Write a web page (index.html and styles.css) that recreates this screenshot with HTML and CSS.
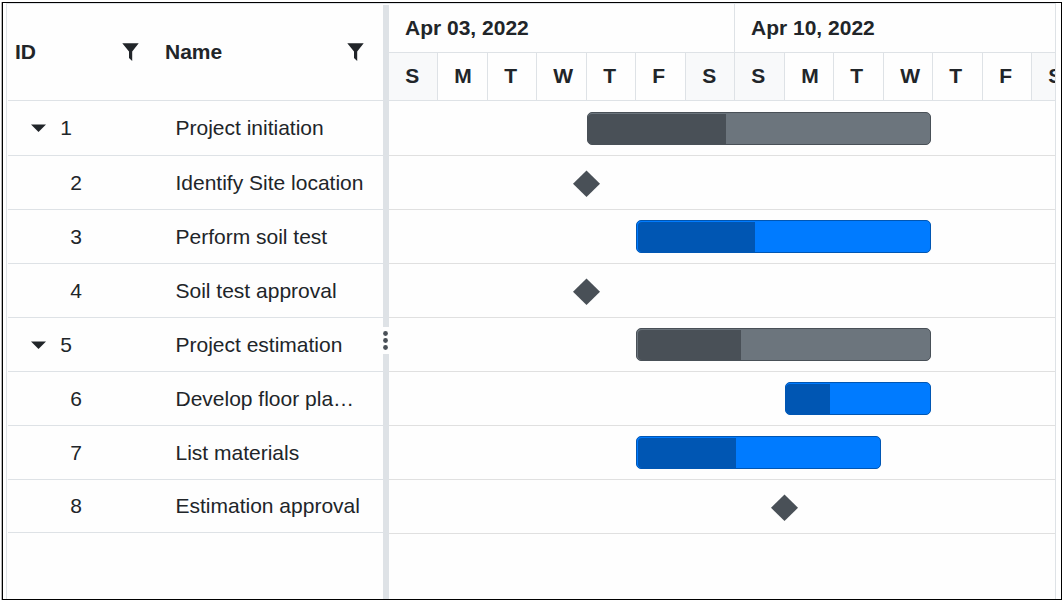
FILE: index.html
```html
<!DOCTYPE html>
<html lang="en">
<head>
<meta charset="utf-8">
<title>Project schedule</title>
<link rel="stylesheet" href="styles.css">
</head>
<body>
<main class="frame">
<div class="gantt">
  <section class="grid">
    <header class="grid-head">
      <span class="head-id">ID</span>
      <svg class="filter" viewBox="0 0 17 18"><path d="M0.3 0.3H16.7L10.2 8.5V18L7 15V8.5Z"/></svg>
      <span class="head-name">Name</span>
      <svg class="filter" viewBox="0 0 17 18"><path d="M0.3 0.3H16.7L10.2 8.5V18L7 15V8.5Z"/></svg>
    </header>
    <div class="row parent first"><svg class="arrow" viewBox="0 0 15 8"><path d="M0 0.4H15L7.5 8Z"/></svg><span class="id">1</span><span class="name">Project initiation</span></div>
    <div class="row"><span class="id">2</span><span class="name">Identify Site location</span></div>
    <div class="row"><span class="id">3</span><span class="name">Perform soil test</span></div>
    <div class="row"><span class="id">4</span><span class="name">Soil test approval</span></div>
    <div class="row parent"><svg class="arrow" viewBox="0 0 15 8"><path d="M0 0.4H15L7.5 8Z"/></svg><span class="id">5</span><span class="name">Project estimation</span></div>
    <div class="row"><span class="id">6</span><span class="name">Develop floor pla…</span></div>
    <div class="row"><span class="id">7</span><span class="name">List materials</span></div>
    <div class="row last"><span class="id">8</span><span class="name">Estimation approval</span></div>
  </section>
  <div class="splitter">
    <div class="split-top"></div>
    <svg class="handle" viewBox="0 0 6 27"><circle cx="2.5" cy="6.5" r="2.4"/><circle cx="2.5" cy="13.5" r="2.4"/><circle cx="2.5" cy="20.5" r="2.4"/></svg>
    <div class="split-bottom"></div>
  </div>
  <section class="chart">
    <div class="weeks"><span class="week">Apr 03, 2022</span><span class="week">Apr 10, 2022</span></div>
    <div class="days">
      <span class="off">S</span><span>M</span><span>T</span><span>W</span><span>T</span><span>F</span><span class="off">S</span>
      <span class="off">S</span><span>M</span><span>T</span><span>W</span><span>T</span><span>F</span><span class="off">S</span>
    </div>
    <div class="lane first"><div class="bar summary flush" style="margin-left:198px;width:344px"><i style="width:138px"></i></div></div>
    <div class="lane"><svg class="milestone" style="margin-left:184px" viewBox="0 0 27 27"><path d="M13.5 0.5L27 13.8L13.5 27L0 13.8Z"/></svg></div>
    <div class="lane"><div class="bar" style="margin-left:247px;width:295px"><i style="width:117px"></i></div></div>
    <div class="lane"><svg class="milestone" style="margin-left:184px" viewBox="0 0 27 27"><path d="M13.5 0.5L27 13.8L13.5 27L0 13.8Z"/></svg></div>
    <div class="lane"><div class="bar summary" style="margin-left:247px;width:295px"><i style="width:103px"></i></div></div>
    <div class="lane"><div class="bar flush" style="margin-left:396px;width:146px"><i style="width:44px"></i></div></div>
    <div class="lane"><div class="bar" style="margin-left:247px;width:245px"><i style="width:98px"></i></div></div>
    <div class="lane"><svg class="milestone" style="margin-left:382px" viewBox="0 0 27 27"><path d="M13.5 0.5L27 13.8L13.5 27L0 13.8Z"/></svg></div>
  </section>
</div>
</main>
</body>
</html>
```
FILE: styles.css
```css
* { box-sizing: border-box; }
body {
  margin: 0;
  height: 600px;
  overflow: hidden;
  padding: 2px 2px 0 2px;
  background: #fff;
  color: #212529;
  font: 21px/24px "Liberation Sans", Arial, sans-serif;
}
.frame {
  width: 1060px;
  height: 598px;
  padding: 0 5px 0 3px;
  border: 1px solid #000;
  box-shadow: -1px 0 #b5b5b5;
}
.gantt {
  display: flex;
  height: 596px;
  border: 1px solid #dee2e6;
  border-bottom: 0;
  background: #fefefe;
}
.grid { width: 376px; padding: 0 0 0 1px; flex: none; }
.grid-head {
  display: flex;
  align-items: center;
  height: 97px;
  padding-left: 7px;
  border-bottom: 1px solid #dee2e6;
  font-weight: bold;
}
.head-id { width: 107px; }
.head-name { width: 182px; margin-left: 26px; }
.filter { width: 17px; height: 18px; fill: #212529; flex: none; }
.row {
  display: flex;
  align-items: center;
  height: 54px;
  padding-left: 62.3px;
  border-bottom: 1px solid #dee2e6;
}
.row.first { height: 55px; }
.row.last { height: 53px; }
.row .id { width: 105.2px; }
.row.parent { padding-left: 23px; }
.row.parent .id { width: 115.2px; margin-left: 14.3px; }
.arrow { width: 15px; height: 8px; fill: #212529; flex: none; }
.name { white-space: nowrap; }
.splitter { display: flex; flex-direction: column; width: 6px; flex: none; padding-top: 1px; }
.split-top { height: 322px; background: #dee2e6; }
.handle { height: 27px; width: 6px; fill: #495057; }
.split-bottom { flex: 1; background: #dee2e6; }
.chart { flex: 1; min-width: 0; overflow: hidden; }
.weeks { display: grid; grid-template-columns: 346px 321px; height: 49px; border-bottom: 1px solid #dee2e6; font-weight: bold; }
.week { padding: 12px 0 0 16px; }
.week:first-child { border-right: 1px solid #dee2e6; }
.days {
  display: grid;
  grid-template-columns: 49px 50px 49px 50px 49px 50px 49px 50px 49px 50px 49px 50px 49px 50px;
  height: 48px;
  border-bottom: 1px solid #dee2e6;
  font-weight: bold;
}
.days span { border-right: 1px solid #dee2e6; padding: 11px 0 0 16.3px; }
.days .off { background: #f8f9fa; }
.lane { height: 54px; border-bottom: 1px solid #e0e0e0; padding-top: 10px; }
.lane.first { height: 55px; padding-top: 11px; }
.bar {
  height: 33px;
  padding: 1px 0 0 1px;
  border: 1px solid #0056b3;
  border-radius: 5px;
  background: #007bff;
}
.bar.flush { padding-left: 0; }
.bar i { display: block; height: 30px; background: #0056b3; border-radius: 4px 0 0 4px; }
.bar.summary { border-color: #495057; background: #6c757d; }
.bar.summary i { background: #495057; }
.milestone { display: block; width: 27px; height: 27px; margin-top: 4px; fill: #495057; }
```
